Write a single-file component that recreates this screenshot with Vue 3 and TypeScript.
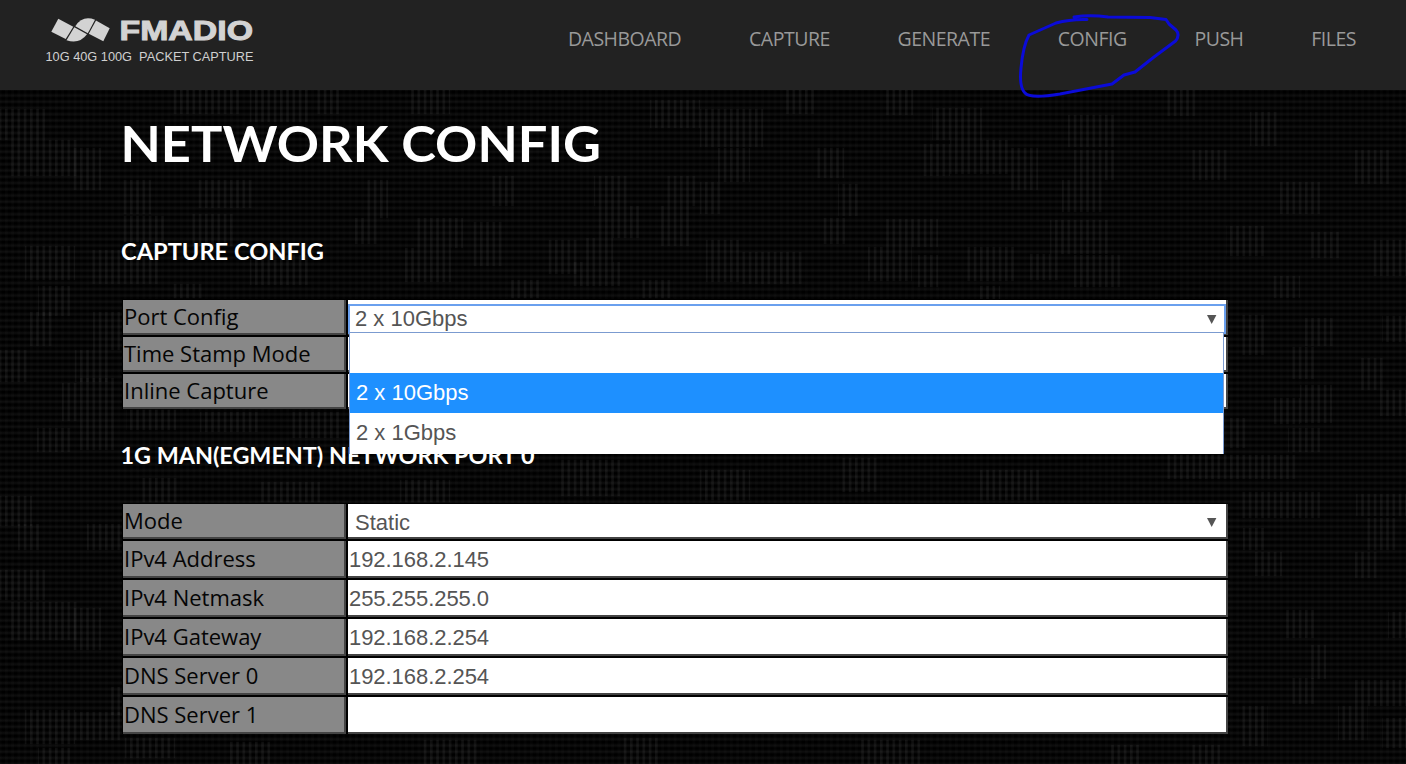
<script setup lang="ts">
interface Row { label: string; value: string; kind: 'select' | 'text' | 'open' | 'blank' }

const nav: string[] = ['DASHBOARD', 'CAPTURE', 'GENERATE', 'CONFIG', 'PUSH', 'FILES']

const captureRows: Row[] = [
  { label: 'Port Config', value: '2 x 10Gbps', kind: 'open' },
  { label: 'Time Stamp Mode', value: '', kind: 'blank' },
  { label: 'Inline Capture', value: '', kind: 'blank' },
]
const options = ['', '2 x 10Gbps', '2 x 1Gbps']

const networkRows: Row[] = [
  { label: 'Mode', value: 'Static', kind: 'select' },
  { label: 'IPv4 Address', value: '192.168.2.145', kind: 'text' },
  { label: 'IPv4 Netmask', value: '255.255.255.0', kind: 'text' },
  { label: 'IPv4 Gateway', value: '192.168.2.254', kind: 'text' },
  { label: 'DNS Server 0', value: '192.168.2.254', kind: 'text' },
  { label: 'DNS Server 1', value: '', kind: 'blank' },
]

// Woven patches of the backdrop: x, y, width, height
const patches: number[][] = [
  [0, 109, 45, 31], [10, 140, 70, 36], [73, 148, 28, 42], [25, 246, 50, 34], [92, 250, 28, 34],
  [38, 286, 32, 30], [30, 312, 22, 34], [93, 312, 28, 38], [0, 350, 27, 32], [75, 350, 34, 32],
  [62, 383, 18, 38], [80, 378, 34, 72], [37, 428, 34, 24], [0, 496, 32, 30], [18, 524, 22, 26],
  [87, 524, 34, 26], [0, 570, 45, 30], [10, 602, 70, 38], [73, 608, 28, 42], [110, 687, 10, 28],
  [25, 710, 50, 34], [75, 712, 45, 28], [38, 748, 32, 16],
  [170, 90, 70, 24], [250, 90, 60, 32], [315, 90, 24, 24], [410, 90, 40, 24],
  [123, 180, 28, 34], [198, 180, 54, 28], [122, 216, 44, 26], [190, 214, 46, 32], [366, 180, 22, 38],
  [355, 218, 22, 26], [415, 218, 48, 30], [405, 248, 46, 34], [470, 222, 32, 44], [120, 250, 40, 34],
  [250, 255, 60, 30], [172, 284, 30, 14], [490, 176, 24, 30], [510, 280, 30, 18], [546, 240, 34, 34],
  [594, 176, 34, 30], [598, 206, 42, 32], [585, 238, 28, 24], [570, 262, 50, 24], [650, 100, 50, 28],
  [664, 176, 34, 30], [660, 206, 30, 40], [640, 280, 34, 18],
  [700, 109, 63, 38], [718, 148, 32, 34], [700, 182, 21, 32], [706, 240, 36, 42], [742, 252, 60, 32],
  [786, 90, 28, 24], [883, 90, 30, 25], [814, 148, 30, 30], [838, 184, 20, 32], [823, 218, 22, 26],
  [932, 108, 50, 32], [920, 144, 30, 32], [950, 140, 60, 34], [1010, 148, 28, 42], [1068, 115, 48, 32],
  [1074, 150, 42, 30], [1062, 180, 40, 32], [1050, 220, 60, 34], [886, 219, 52, 28], [868, 247, 44, 34],
  [918, 255, 20, 32], [964, 247, 50, 34], [1030, 254, 28, 26], [1074, 255, 50, 32], [978, 286, 22, 14],
  [1166, 90, 30, 26], [1250, 112, 28, 34], [1190, 150, 40, 30], [1280, 182, 40, 32], [1352, 150, 40, 34],
  [1226, 226, 40, 30], [1310, 232, 30, 26], [1370, 240, 36, 36], [1270, 276, 30, 22],
  [1240, 315, 24, 40], [1305, 318, 28, 28], [1292, 347, 24, 32], [1300, 385, 32, 38], [1274, 398, 26, 26],
  [1288, 428, 32, 24], [1358, 358, 28, 32], [1380, 390, 26, 26], [1382, 316, 24, 26], [1230, 418, 18, 30],
  [1166, 455, 130, 24], [1240, 492, 80, 26], [1356, 494, 50, 22], [1364, 518, 32, 32], [1243, 528, 22, 22],
  [1254, 552, 28, 24], [1352, 552, 28, 26], [1286, 610, 28, 28], [1388, 612, 18, 26], [1308, 645, 18, 34],
  [1292, 678, 22, 26], [1355, 680, 51, 26], [1240, 706, 28, 40], [1338, 706, 30, 34], [1382, 718, 24, 30],
  [1110, 745, 30, 19], [1190, 745, 30, 19],
  [126, 410, 50, 20], [200, 412, 60, 20], [290, 412, 50, 26], [140, 478, 40, 24], [260, 482, 60, 20],
  [400, 480, 50, 22], [560, 460, 60, 36], [700, 470, 50, 30], [840, 458, 40, 34], [980, 470, 60, 30],
  [125, 738, 50, 20], [230, 742, 40, 22], [420, 740, 60, 24], [620, 738, 40, 26], [860, 740, 60, 24],
]
</script>

<template>
  <div class="page">
    <svg class="weave" width="1406" height="764" aria-hidden="true">
      <defs>
        <pattern id="bars" x="-1.25" width="6.25" height="6.25" patternUnits="userSpaceOnUse">
          <rect width="2.5" height="6.25" fill="#fff" fill-opacity="0.043" />
        </pattern>
        <pattern id="faint" x="-1.25" width="6.25" height="6.25" patternUnits="userSpaceOnUse">
          <rect width="2.5" height="6.25" fill="#fff" fill-opacity="0.015" />
        </pattern>
      </defs>
      <rect width="1406" height="764" fill="url(#faint)" />
      <rect v-for="(p, i) in patches" :key="i" :x="p[0]" :y="p[1]" :width="p[2]" :height="p[3]" fill="url(#bars)" />
    </svg>

    <header class="bar">
      <svg class="logo" width="216" height="54" viewBox="0 0 216 54">
        <g fill="#d3d3d3">
          <path d="M17.3 8.7 L32.3 16.7 L24.7 29 L10.3 21.7 Z" />
          <path d="M33.3 17.3 L46 24.3 Q38.5 34.5 25.5 30.3 Z" />
          <path d="M34.3 16.3 Q41.5 5 54 9.8 L46.8 23.2 Z" />
          <path d="M55 10.6 L68.7 18.3 L62.3 31.2 L47.8 23.8 Z" />
        </g>
        <text class="brand" x="78.5" y="30.2" textLength="133.5" lengthAdjust="spacingAndGlyphs">FMADIO</text>
        <text class="tag" x="4.5" y="51" textLength="208" lengthAdjust="spacingAndGlyphs">10G 40G 100G&nbsp; PACKET CAPTURE</text>
      </svg>
      <nav class="nav">
        <a v-for="n in nav" :key="n">{{ n }}</a>
      </nav>
    </header>

    <main class="content">
      <h1><svg width="490" height="50"><text x="-1.5" y="41" textLength="480.5" lengthAdjust="spacingAndGlyphs">NETWORK CONFIG</text></svg></h1>
      <h2 class="first"><svg width="420" height="30"><text x="-1" y="22" textLength="203" lengthAdjust="spacingAndGlyphs">CAPTURE CONFIG</text></svg></h2>
      <div class="table">
        <div v-for="r in captureRows" :key="r.label" class="row">
          <div class="label">{{ r.label }}</div>
          <div class="value">
            <div v-if="r.kind === 'open'" class="select open">
              <span>{{ r.value }}</span><svg class="arrow" width="10" height="9"><path d="M0 0H9.4L4.7 9Z" /></svg>
              <ul class="menu">
                <li v-for="o in options" :key="o" :class="{ on: o === r.value }">{{ o }}</li>
              </ul>
            </div>
          </div>
        </div>
      </div>
      <h2 class="second"><svg width="420" height="30"><text x="-1.5" y="22" textLength="414" lengthAdjust="spacingAndGlyphs">1G MAN(EGMENT) NETWORK PORT 0</text></svg></h2>
      <div class="table net">
        <div v-for="r in networkRows" :key="r.label" class="row">
          <div class="label">{{ r.label }}</div>
          <div class="value">
            <div v-if="r.kind === 'select'" class="select">
              <span>{{ r.value }}</span><svg class="arrow" width="10" height="9"><path d="M0 0H9.4L4.7 9Z" /></svg>
            </div>
            <span v-else class="input">{{ r.value }}</span>
          </div>
        </div>
      </div>
    </main>

    <svg class="scribble" width="170" height="100" viewBox="0 0 170 100" aria-hidden="true">
      <path d="M74 17 Q90 14.5 108 17 L150 17.5 L166 19.5 L169 24 L176 30 Q180.500 35 175.500 41 L154 57 L135 72 L124 75 L112 84 L86 89 L60 94 Q30 99 25 93 Q19 87 21 68 Q23 46 29 35 L56 23 Q70 19 87 19.500" />
    </svg>
  </div>
</template>

<style>
html, body { margin: 0; background: #000; overflow: hidden; }
</style>

<style scoped>
.page {
  position: relative; width: 1406px; height: 764px; overflow: hidden;
  background: repeating-linear-gradient(to bottom, #040404 0, #0d0d0d 1.5px, #0a0a0a 2.5px, #000 4px, #000 5.2px, #040404 6.25px);
  font-family: "Open Sans", sans-serif;
}
.weave { position: absolute; left: 0; top: 0; }
.bar {
  position: relative; display: flex; justify-content: space-between; box-sizing: border-box;
  height: 90px; padding: 10px 50px 0 41px; background: #222;
}
.logo { flex: none; }
.brand { font: bold 27.5px "Liberation Sans", sans-serif; fill: #d3d3d3; stroke: #d3d3d3; stroke-width: 1px; }
.tag { font: 12.5px "Liberation Sans", sans-serif; fill: #d0d0d0; }
.nav { display: flex; gap: 67.8px; padding-top: 16px; font-size: 19.5px; line-height: 26px; letter-spacing: -0.5px; color: #999; }
.content { position: relative; width: 1106px; margin-left: 122px; }
h1, h2 { margin: 0; font-weight: bold; line-height: 0; }
h1 svg, h2 svg { display: block; overflow: visible; fill: #fff; font-family: Lato, sans-serif; }
h1 { padding-top: 31px; height: 50px; }
h1 svg { font-size: 49px; }
h2 svg { font-size: 22px; }
h2.first { margin-top: 67px; height: 30px; }
h2.second { margin-top: 33px; height: 30px; }
.table {
  display: flex; flex-direction: column; gap: 2px; margin-top: 31px; padding: 1px 0 0 1px;
  background: #000; color: #050505; font-size: 22px;
}
.row { display: flex; gap: 2px; height: 35px; }
.net .row:not(:first-child) { height: 37px; }
.label, .value { box-sizing: border-box; border: 0 solid #444; border-width: 0 2px 2px 0; }
.label { width: 223px; padding-left: 1px; background: #888; line-height: 32px; }
.net .row:not(:first-child) .label { line-height: 34px; }
.value {
  flex: 1; display: flex; background: #fff; color: #555;
  font: 22px "Liberation Sans", sans-serif;
}
.input { padding-left: 1px; line-height: 37px; letter-spacing: -0.05px; }
.select {
  position: relative; display: flex; flex: 1; align-items: center; justify-content: space-between;
  box-sizing: border-box; padding: 4px 9px 0 7px;
}
.arrow { fill: #555; }
.open { margin: 4px 0 0 0; height: 30px; padding: 0 7px 0 5px; border: 2px solid #6aa0ee; background: #fff; }
.menu {
  position: absolute; z-index: 2; left: -1px; top: 26px; width: 873px; height: 121px; margin: 0; padding: 0;
  list-style: none; background: #fff; border: 1px solid #7b9bd0; border-bottom: 0;
}
.menu li { box-sizing: border-box; height: 40px; padding-left: 6px; line-height: 40px; }
.menu .on { color: #fff; background: #1e90ff; }
.scribble { position: absolute; left: 1000px; top: 0; overflow: visible; fill: none; stroke: #0b0bd8; stroke-width: 3; stroke-linejoin: round; stroke-linecap: round; }
</style>
